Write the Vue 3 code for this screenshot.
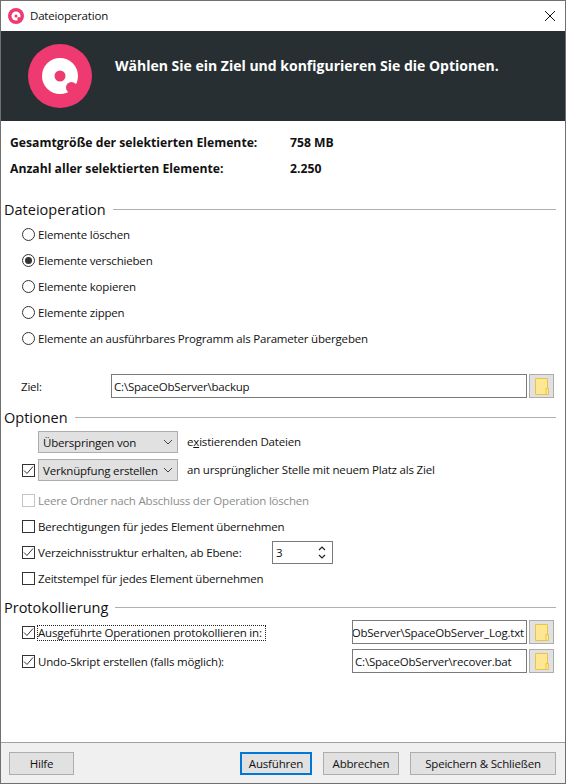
<template>
  <div class="window">
    <div class="titlebar">
      <svg class="title-icon" width="16" height="16" viewBox="0 0 64 64">
        <circle cx="32" cy="32" r="32" fill="#ee3a70" />
        <circle cx="32" cy="32" r="18" fill="#fff" />
        <circle cx="32" cy="32" r="6" fill="#ee3a70" />
        <circle cx="44" cy="43" r="7" fill="#ee3a70" />
      </svg>
      <span class="title-text">Dateioperation</span>
      <svg class="close" width="12" height="12" viewBox="0 0 12 12">
        <path d="M1 1L11 11M11 1L1 11" stroke="#111" stroke-width="1" fill="none" />
      </svg>
    </div>

    <div class="banner">
      <svg width="64" height="64" viewBox="0 0 64 64">
        <circle cx="32" cy="32" r="32" fill="#ee3a70" />
        <circle cx="32" cy="32" r="18" fill="#fff" />
        <circle cx="32" cy="32" r="5.5" fill="#ee3a70" />
        <circle cx="43.5" cy="43.5" r="5.5" fill="#ee3a70" />
      </svg>
      <div class="banner-text">Wählen Sie ein Ziel und konfigurieren Sie die Optionen.</div>
    </div>

    <div class="content">
      <div class="stats">
        <div class="stat" v-for="s in stats" :key="s.label">
          <span class="stat-label">{{ s.label }}</span>
          <span>{{ s.value }}</span>
        </div>
      </div>

      <div class="heading heading-first"><span>Dateioperation</span><i></i></div>
      <div class="radios">
        <div class="row" v-for="(r, i) in radios" :key="r">
          <span class="radio" :class="{ on: i === 1 }"></span>
          <span>{{ r }}</span>
        </div>
      </div>

      <div class="target">
        <span class="target-label">Ziel:</span>
        <div class="input grow">C:\SpaceObServer\backup</div>
        <button class="folder">
          <svg width="14" height="17" viewBox="0 0 14 17">
            <path d="M0.5 0.5H12.5V16.5H0.5Z" fill="#fee792" stroke="#eac34b" />
            <path d="M11 16.5V10.5H13.5V16.5Z" fill="#fee792" stroke="#eac34b" />
          </svg>
        </button>
      </div>

      <div class="heading heading-opt"><span>Optionen</span><i></i></div>
      <div class="combo-row first-combo">
        <div class="combo">
          <span>Überspringen von</span>
          <svg width="10" height="6" viewBox="0 0 10 6"><path d="M1 1L5 5L9 1" stroke="#444" fill="none" /></svg>
        </div>
        <span class="combo-after"><span>e<u>x</u>istierenden Dateien</span></span>
      </div>
      <div class="combo-row second-combo">
        <span class="check on">
          <svg width="13" height="13" viewBox="0 0 13 13"><path d="M2 6.5L5 9.5L11 2.5" stroke="#333" fill="none" /></svg>
        </span>
        <div class="combo">
          <span>Verknüpfung erstellen</span>
          <svg width="10" height="6" viewBox="0 0 10 6"><path d="M1 1L5 5L9 1" stroke="#444" fill="none" /></svg>
        </div>
        <span class="combo-after">an ursprünglicher Stelle mit neuem Platz als Ziel</span>
      </div>

      <div class="row check-row disabled first-check">
        <span class="check"></span>
        <span>Leere Ordner nach Abschluss der Operation löschen</span>
      </div>
      <div class="row check-row">
        <span class="check"></span>
        <span>Berechtigungen für jedes Element übernehmen</span>
      </div>
      <div class="row check-row">
        <span class="check on">
          <svg width="13" height="13" viewBox="0 0 13 13"><path d="M2 6.5L5 9.5L11 2.5" stroke="#333" fill="none" /></svg>
        </span>
        <span class="spin-label">Verzeichnisstruktur erhalten, ab Ebene:</span>
        <div class="spin">
          <span>3</span>
          <svg width="8" height="13" viewBox="0 0 8 13">
            <path d="M1 4L4 1L7 4M1 9L4 12L7 9" stroke="#222" stroke-width="1.2" fill="none" />
          </svg>
        </div>
      </div>
      <div class="row check-row">
        <span class="check"></span>
        <span>Zeitstempel für jedes Element übernehmen</span>
      </div>

      <div class="heading heading-log"><span>Protokollierung</span><i></i></div>
      <div class="log-row log-first">
        <span class="check on">
          <svg width="13" height="13" viewBox="0 0 13 13"><path d="M2 6.5L5 9.5L11 2.5" stroke="#333" fill="none" /></svg>
        </span>
        <span class="log-label focused">Ausgeführte Operationen protokollieren in:</span>
        <div class="input log-input scrolled"><span>C:\SpaceObServer\SpaceObServer_Log.txt</span></div>
        <button class="folder">
          <svg width="14" height="17" viewBox="0 0 14 17">
            <path d="M0.5 0.5H12.5V16.5H0.5Z" fill="#fee792" stroke="#eac34b" />
            <path d="M11 16.5V10.5H13.5V16.5Z" fill="#fee792" stroke="#eac34b" />
          </svg>
        </button>
      </div>
      <div class="log-row log-second">
        <span class="check on">
          <svg width="13" height="13" viewBox="0 0 13 13"><path d="M2 6.5L5 9.5L11 2.5" stroke="#333" fill="none" /></svg>
        </span>
        <span class="log-label">Undo-Skript erstellen (falls möglich):</span>
        <div class="input log-input">C:\SpaceObServer\recover.bat</div>
        <button class="folder">
          <svg width="14" height="17" viewBox="0 0 14 17">
            <path d="M0.5 0.5H12.5V16.5H0.5Z" fill="#fee792" stroke="#eac34b" />
            <path d="M11 16.5V10.5H13.5V16.5Z" fill="#fee792" stroke="#eac34b" />
          </svg>
        </button>
      </div>
    </div>

    <div class="footer">
      <button class="btn btn-help">Hilfe</button>
      <button class="btn btn-run">Ausführen</button>
      <button class="btn btn-cancel">Abbrechen</button>
      <button class="btn btn-save">Speichern &amp; Schließen</button>
    </div>
  </div>
</template>

<script setup>
const stats = [
  { label: 'Gesamtgröße der selektierten Elemente:', value: '758 MB' },
  { label: 'Anzahl aller selektierten Elemente:', value: '2.250' }
]
const radios = [
  'Elemente löschen',
  'Elemente verschieben',
  'Elemente kopieren',
  'Elemente zippen',
  'Elemente an ausführbares Programm als Parameter übergeben'
]
</script>

<style>
html, body {
  margin: 0;
  background: #fff;
}
</style>

<style scoped>
.window {
  width: 566px;
  height: 784px;
  box-sizing: border-box;
  border: 1px solid #707070;
  background: #fff;
  display: flex;
  flex-direction: column;
  font-family: "Open Sans", "Noto Sans", sans-serif;
  font-size: 11.5px;
  letter-spacing: -0.19px;
  color: #111;
  overflow: hidden;
}
.titlebar {
  height: 30px;
  flex: none;
  display: flex;
  align-items: center;
  padding-left: 7px;
  padding-right: 9px;
  padding-bottom: 1px;
  box-sizing: border-box;
}
.title-text {
  margin-left: 6px;
}
.close {
  margin-left: auto;
}
.banner {
  height: 90px;
  flex: none;
  background: #272f33;
  display: flex;
  align-items: center;
  padding-left: 27px;
}
.banner-text {
  margin-left: 23px;
  margin-top: -22px;
  color: #fff;
  font-weight: 700;
  font-size: 14px;
  letter-spacing: 0;
}
.content {
  flex: 1;
  padding: 0 9px 0 3px;
}
.stats {
  padding-left: 6px;
  padding-top: 8px;
}
.stat {
  height: 26px;
  display: flex;
  align-items: center;
  font-weight: 700;
  font-size: 12.2px;
  letter-spacing: 0;
}
.stat-label {
  width: 280px;
}
.heading {
  display: flex;
  align-items: center;
  font-size: 14.5px;
  letter-spacing: 0;
  height: 20px;
}
.heading i {
  flex: 1;
  height: 1px;
  background: #b0b0b0;
  margin-left: 7px;
}
.heading-first {
  margin-top: 18px;
}
.heading-opt {
  margin-top: 9px;
}
.heading-log {
  margin-top: 6px;
}
.radios {
  margin-top: 2px;
  padding-left: 18px;
}
.row {
  height: 26px;
  display: flex;
  align-items: center;
}
.radio {
  width: 13px;
  height: 13px;
  box-sizing: border-box;
  border: 1px solid #333;
  border-radius: 50%;
  margin-right: 3px;
  flex: none;
  position: relative;
}
.radio.on::after {
  content: "";
  position: absolute;
  inset: 2px;
  border-radius: 50%;
  background: #333;
}
.target {
  display: flex;
  align-items: center;
  margin-top: 23px;
  padding-left: 17px;
  padding-right: 2px;
}
.target-label {
  width: 90px;
}
.input {
  height: 24px;
  box-sizing: border-box;
  border: 1px solid #7a7a7a;
  padding-left: 2px;
  display: flex;
  align-items: center;
  white-space: nowrap;
  overflow: hidden;
  background: #fff;
}
.grow {
  flex: 1;
}
.folder {
  width: 25px;
  height: 24px;
  margin-left: 2px;
  padding: 0;
  flex: none;
  background: #e1e1e1;
  border: 1px solid #adadad;
  display: flex;
  align-items: center;
  justify-content: center;
}
.combo-row {
  display: flex;
  align-items: center;
  padding-left: 18px;
}
.first-combo {
  padding-left: 34px;
  margin-top: 4px;
}
.second-combo {
  margin-top: 6px;
}
.combo {
  width: 140px;
  height: 22px;
  box-sizing: border-box;
  background: #e1e1e1;
  border: 1px solid #adadad;
  padding: 0 4px;
  display: flex;
  align-items: center;
  justify-content: space-between;
  flex: none;
}
.combo-after {
  margin-left: 9px;
  margin-top: -2px;
}
.check {
  width: 13px;
  height: 13px;
  box-sizing: border-box;
  border: 1px solid #333;
  margin-right: 3px;
  flex: none;
  display: block;
  position: relative;
}
.check svg {
  position: absolute;
  left: -1px;
  top: -1px;
}
.check-row {
  padding-left: 18px;
}
.first-check {
  margin-top: 6px;
}
.disabled {
  color: #8d8d8d;
}
.disabled .check {
  border-color: #c4c4c4;
}
.spin-label {
  width: 234px;
  flex: none;
}
.spin {
  width: 61px;
  height: 23px;
  box-sizing: border-box;
  border: 1px solid #7a7a7a;
  padding: 0 6px 0 3px;
  display: flex;
  align-items: center;
  justify-content: space-between;
}
.log-row {
  display: flex;
  align-items: center;
  padding-left: 18px;
  padding-right: 2px;
}
.log-first {
  margin-top: 3px;
}
.log-second {
  margin-top: 5px;
}
.log-label {
  width: 314px;
  height: 19px;
  line-height: 19px;
  flex: none;
  box-sizing: border-box;
  white-space: nowrap;
}
.focused {
  position: relative;
}
.focused::after {
  content: "";
  position: absolute;
  left: -1px;
  top: 2px;
  width: 229px;
  height: 16px;
  box-sizing: border-box;
  border: 1px dotted #222;
}
.log-input {
  width: 175px;
  flex: none;
}
.scrolled {
  justify-content: flex-end;
  padding-right: 2px;
}
.scrolled span {
  flex: none;
}
.footer {
  height: 41px;
  flex: none;
  box-sizing: border-box;
  background: #f0f0f0;
  border-top: 1px solid #a0a0a0;
  display: flex;
  align-items: center;
  padding: 0 9px 0 8px;
}
.btn {
  height: 23px;
  box-sizing: border-box;
  background: #e1e1e1;
  border: 1px solid #adadad;
  font: inherit;
  letter-spacing: inherit;
  color: #111;
  padding: 0;
}
.btn-help {
  width: 65px;
  margin-right: auto;
}
.btn-run {
  width: 72px;
  border: 2px solid #0078d7;
}
.btn-cancel {
  width: 76px;
  margin-left: 11px;
}
.btn-save {
  width: 146px;
  margin-left: 11px;
}
</style>
